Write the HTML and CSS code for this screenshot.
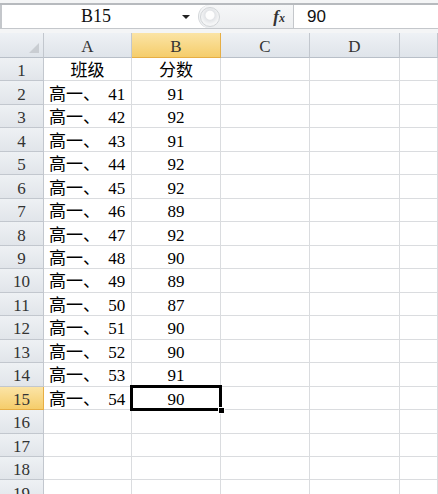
FILE: index.html
```html
<!DOCTYPE html>
<html lang="zh">
<head>
    <meta charset="UTF-8">
    <title>成绩表</title>
    <link rel="stylesheet" href="styles.css">
</head>
<body>
    <div class="formula-bar">
        <div class="name-box">
            <span class="name-text">B15</span>
            <span class="drop-arrow"></span>
        </div>
        <div class="fx-area">
            <span class="knob"></span>
            <span class="fx"><i>f</i><small>x</small></span>
        </div>
        <div class="formula-input">90</div>
    </div>

    <table class="sheet">
        <colgroup>
            <col class="c-head">
            <col class="c-a">
            <col class="c-b">
            <col class="c-c">
            <col class="c-d">
            <col>
        </colgroup>
        <tr class="col-heads">
            <th class="corner"></th><th>A</th><th class="active">B</th><th>C</th><th>D</th><th></th>
        </tr>
        <tr><th>1</th><td class="mid">班级</td><td class="mid">分数</td><td></td><td></td><td></td></tr>
        <tr><th>2</th><td class="name">高一、 41</td><td class="mid">91</td><td></td><td></td><td></td></tr>
        <tr><th>3</th><td class="name">高一、 42</td><td class="mid">92</td><td></td><td></td><td></td></tr>
        <tr><th>4</th><td class="name">高一、 43</td><td class="mid">91</td><td></td><td></td><td></td></tr>
        <tr><th>5</th><td class="name">高一、 44</td><td class="mid">92</td><td></td><td></td><td></td></tr>
        <tr><th>6</th><td class="name">高一、 45</td><td class="mid">92</td><td></td><td></td><td></td></tr>
        <tr><th>7</th><td class="name">高一、 46</td><td class="mid">89</td><td></td><td></td><td></td></tr>
        <tr><th>8</th><td class="name">高一、 47</td><td class="mid">92</td><td></td><td></td><td></td></tr>
        <tr><th>9</th><td class="name">高一、 48</td><td class="mid">90</td><td></td><td></td><td></td></tr>
        <tr><th>10</th><td class="name">高一、 49</td><td class="mid">89</td><td></td><td></td><td></td></tr>
        <tr><th>11</th><td class="name">高一、 50</td><td class="mid">87</td><td></td><td></td><td></td></tr>
        <tr><th>12</th><td class="name">高一、 51</td><td class="mid">90</td><td></td><td></td><td></td></tr>
        <tr><th>13</th><td class="name">高一、 52</td><td class="mid">90</td><td></td><td></td><td></td></tr>
        <tr><th>14</th><td class="name">高一、 53</td><td class="mid">91</td><td></td><td></td><td></td></tr>
        <tr><th class="active">15</th><td class="name">高一、 54</td><td class="mid selected">90</td><td></td><td></td><td></td></tr>
        <tr><th>16</th><td></td><td></td><td></td><td></td><td></td></tr>
        <tr><th>17</th><td></td><td></td><td></td><td></td><td></td></tr>
        <tr><th>18</th><td></td><td></td><td></td><td></td><td></td></tr>
        <tr><th>19</th><td></td><td></td><td></td><td></td><td></td></tr>
    </table>
</body>
</html>
```

FILE: styles.css
```css
html, body {
    margin: 0;
    padding: 0;
    background: #f4f5f6;
    overflow: hidden;
}
body {
    width: 438px;
    height: 494px;
    padding-top: 3px;
    box-sizing: border-box;
}

/* formula bar */
.formula-bar {
    display: flex;
    height: 23px;
    border-top: 2px solid #b7babe;
    border-bottom: 1px solid #c4c7cb;
    background: #fff;
    margin-bottom: 4px;
}
.name-box {
    width: 196px;
    border-left: 2px solid #c4c7cb;
    display: flex;
    align-items: center;
    font-family: "Liberation Serif", serif;
    font-size: 18px;
    color: #111;
}
.name-text {
    flex: 1;
    text-align: center;
    padding-left: 8px;
}
.drop-arrow {
    width: 0;
    height: 0;
    border-left: 4px solid transparent;
    border-right: 4px solid transparent;
    border-top: 4px solid #222;
    margin-right: 8px;
}
.fx-area {
    width: 96px;
    background: linear-gradient(#f6f7f8, #eceef0);
    border-left: 1px solid #d4d7da;
    border-right: 1px solid #c4c7cb;
    border-radius: 12px 0 0 12px;
    display: flex;
    align-items: center;
    justify-content: space-between;
    padding: 0 8px 0 1px;
    box-sizing: border-box;
}
.knob {
    width: 18px;
    height: 18px;
    border-radius: 50%;
    border: 1px solid #d2d5d8;
    background: radial-gradient(circle at 50% 40%, #fdfdfd 0 4px, #e2e4e7 5px, #f4f5f6 9px);
}
.fx {
    font-family: "Liberation Serif", serif;
    font-weight: bold;
    font-size: 17px;
    color: #333;
}
.fx small {
    font-size: 12px;
    font-style: italic;
}
.formula-input {
    flex: 1;
    padding-left: 13px;
    font-family: "Liberation Sans", sans-serif;
    font-size: 17px;
    line-height: 23px;
    color: #111;
}

/* grid */
.sheet {
    border-collapse: separate;
    border-spacing: 0;
    table-layout: fixed;
    width: 438px;
    background: #fff;
    font-family: "Liberation Serif", "Noto Sans CJK SC", serif;
    font-size: 17px;
}
.c-head { width: 44px; }
.c-a { width: 88px; }
.c-b { width: 89px; }
.c-c { width: 89px; }
.c-d { width: 90px; }

.sheet tr {
    height: 23.47px;
}
.sheet tr.col-heads {
    height: 25px;
}
.sheet td, .sheet th {
    padding: 4px 0 0;
    border-right: 1px solid #dadcdf;
    border-bottom: 1px solid #dadcdf;
    white-space: nowrap;
    overflow: hidden;
    line-height: 18px;
}
.sheet th {
    font-weight: normal;
    color: #333;
    text-align: center;
    background: linear-gradient(#eef1f4, #e1e5ea);
    border-right-color: #c2c7ce;
    border-bottom-color: #c2c7ce;
}
.col-heads th {
    background: linear-gradient(#eef1f5, #dfe4ea);
    border-bottom-color: #b8bfc8;
}
.sheet th.active {
    background: linear-gradient(#fbe4a6, #f5cd6b);
    border-right-color: #e6ae45;
    border-bottom-color: #e6ae45;
}
.corner {
    position: relative;
}
.corner::after {
    content: "";
    position: absolute;
    right: 4px;
    bottom: 4px;
    border-left: 10px solid transparent;
    border-bottom: 10px solid #c9cdd2;
}
.sheet td {
    color: #000;
}
.mid {
    text-align: center;
}
.sheet td.name {
    padding-left: 5px;
    word-spacing: 4px;
}
.sheet td.selected {
    position: relative;
    overflow: visible;
}
.selected::before {
    content: "";
    position: absolute;
    left: -2px;
    top: -2px;
    right: -2px;
    bottom: -2px;
    border: 3px solid #000;
}
.selected::after {
    content: "";
    position: absolute;
    right: -5px;
    bottom: -5px;
    width: 5px;
    height: 5px;
    background: #000;
    border: 1px solid #fff;
}
```
